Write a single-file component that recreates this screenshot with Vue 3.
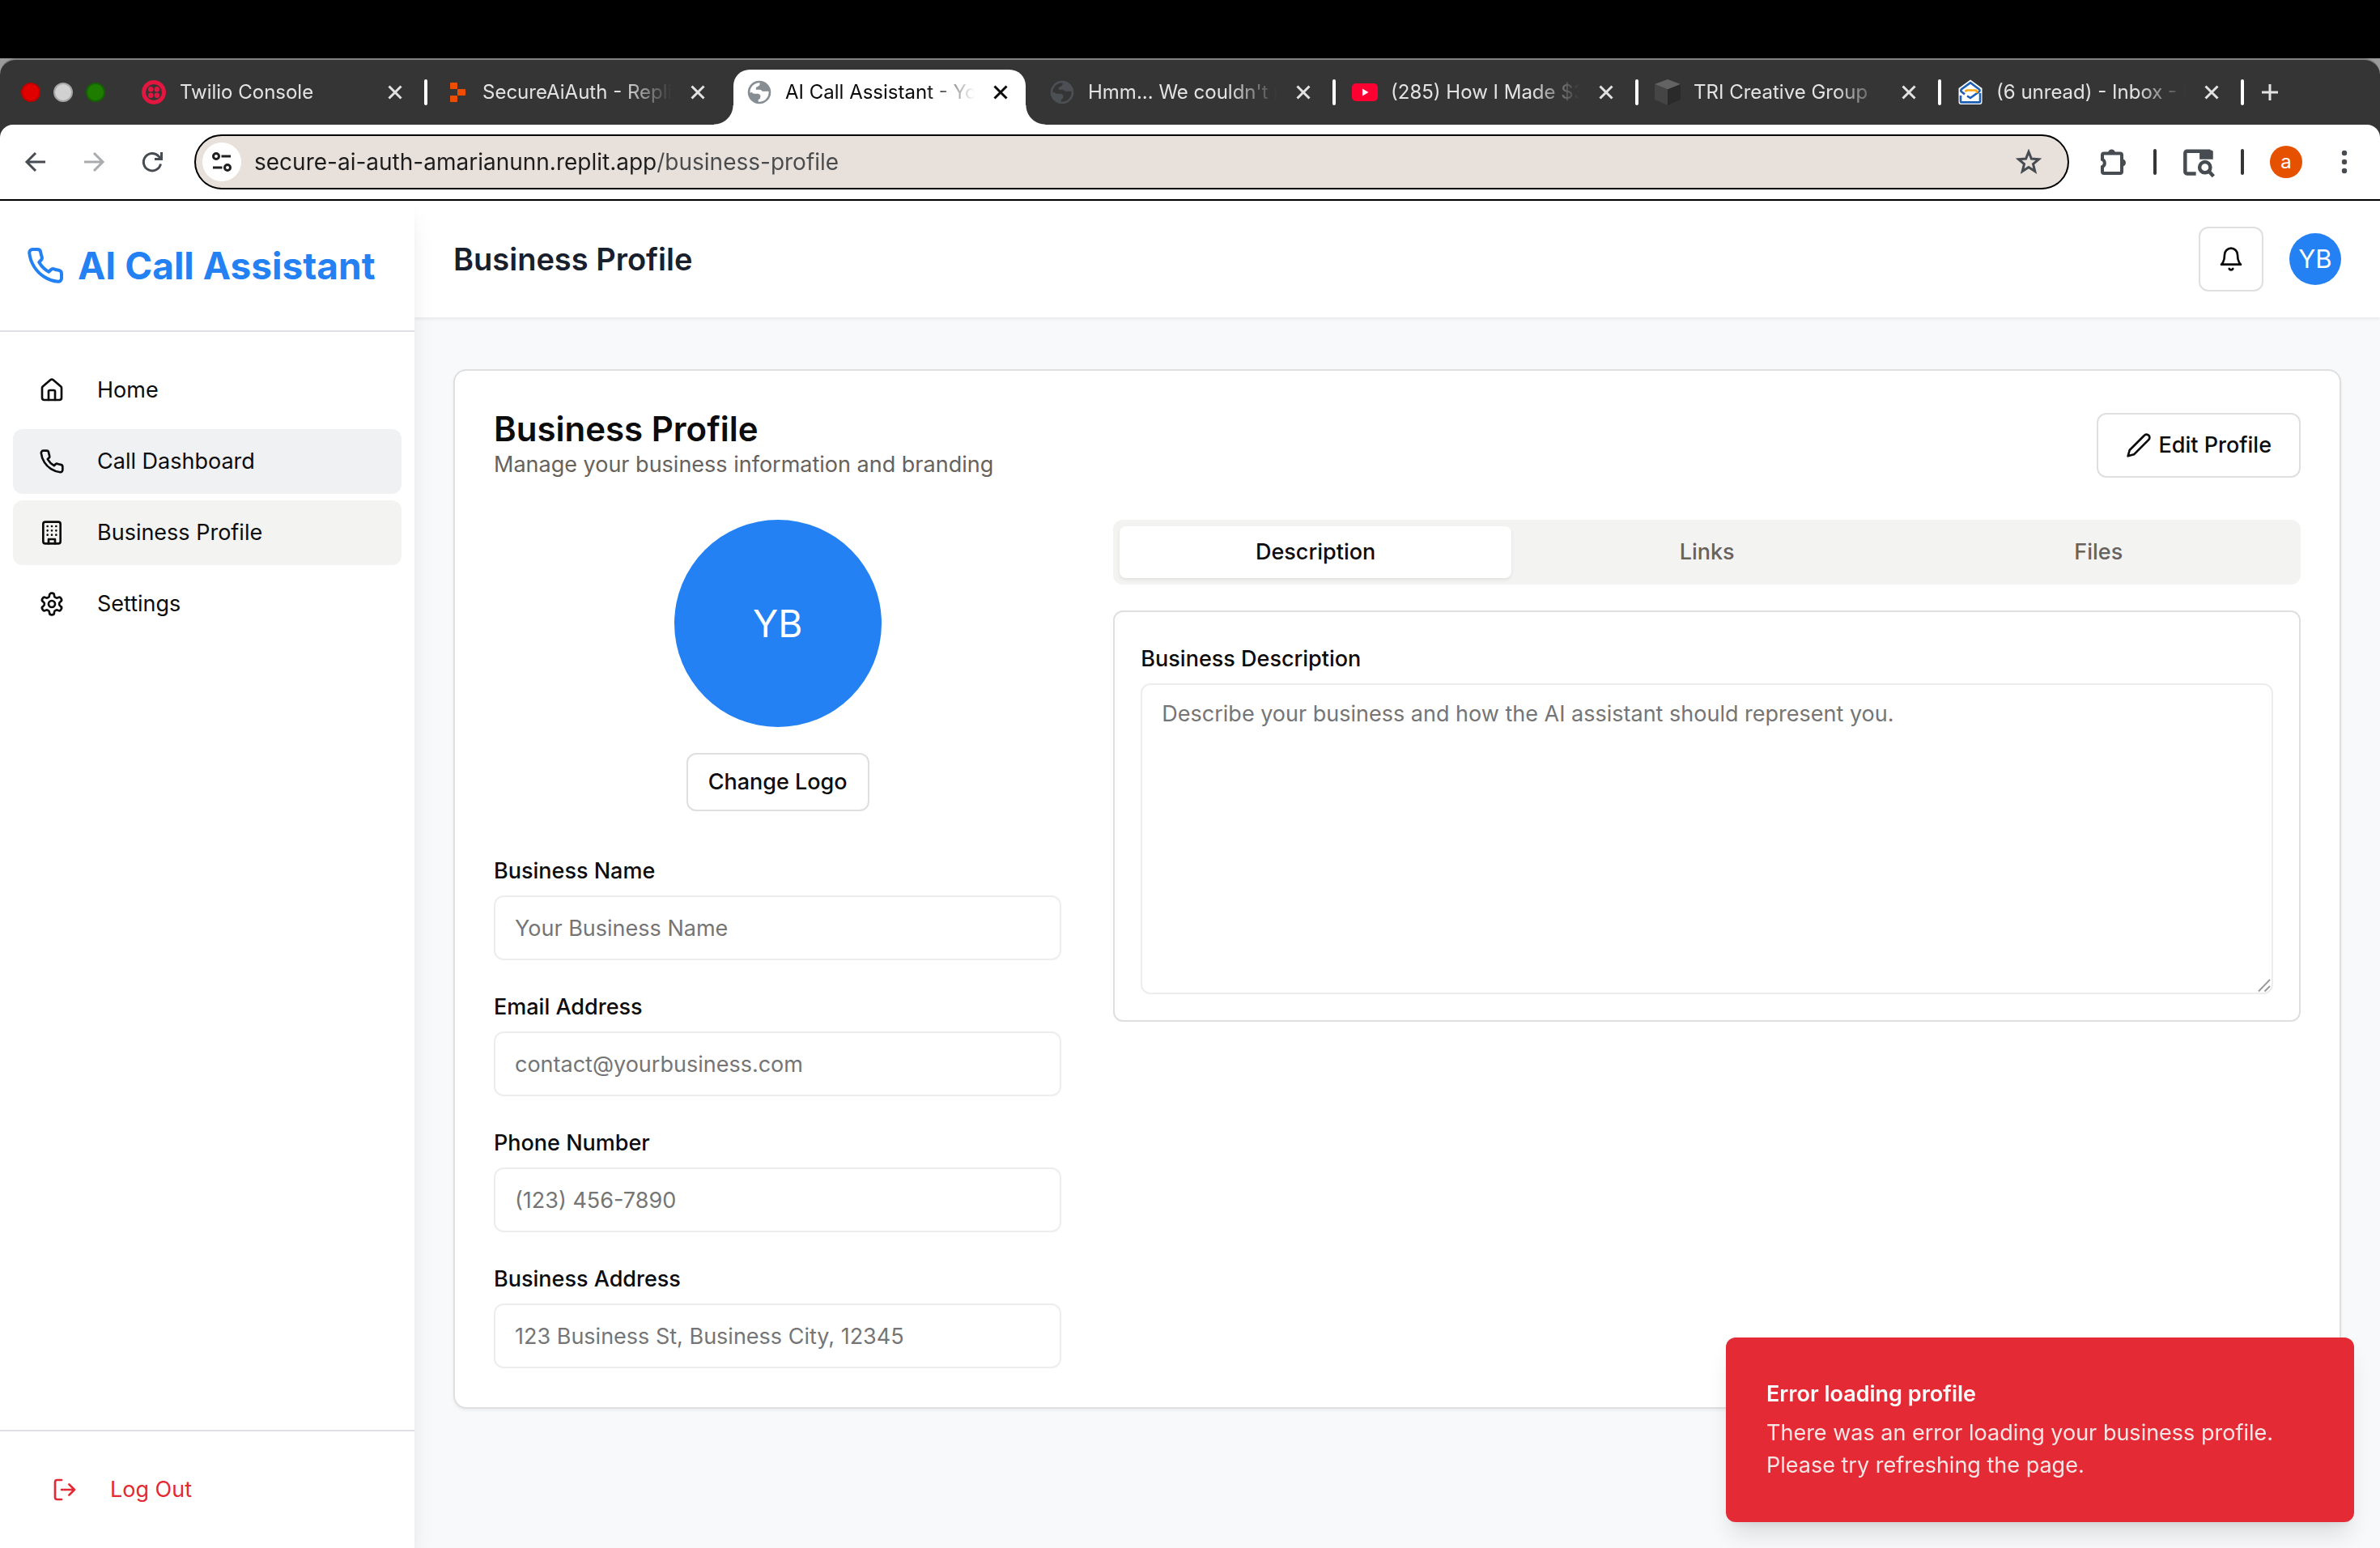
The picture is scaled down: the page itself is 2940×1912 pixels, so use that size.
<script setup>
const tabs = [
  { icon: 'twilio', title: 'Twilio Console', divider: true },
  { icon: 'replit', title: 'SecureAiAuth - Replit' },
  { icon: 'globe', title: 'AI Call Assistant - Your AI', active: true },
  { icon: 'globe', title: "Hmm... We couldn't reach", divider: true },
  { icon: 'youtube', title: '(285) How I Made $30,000', divider: true },
  { icon: 'cube', title: 'TRI Creative Group', divider: true },
  { icon: 'mail', title: '(6 unread) - Inbox - Mail', divider: true },
]

const nav = [
  { icon: 'home', label: 'Home' },
  { icon: 'phone', label: 'Call Dashboard', state: 'hovered' },
  { icon: 'building', label: 'Business Profile', state: 'current' },
  { icon: 'settings', label: 'Settings' },
]

const fields = [
  { id: 'business-name', type: 'text', label: 'Business Name', placeholder: 'Your Business Name' },
  { id: 'email', type: 'email', label: 'Email Address', placeholder: 'contact@yourbusiness.com' },
  { id: 'phone', type: 'tel', label: 'Phone Number', placeholder: '(123) 456-7890' },
  { id: 'address', type: 'text', label: 'Business Address', placeholder: '123 Business St, Business City, 12345' },
]

const panels = ['Description', 'Links', 'Files']
</script>

<template>
  <div class="screen">
    <div class="menu-bar"></div>

    <header class="browser">
      <div class="tab-strip">
        <div class="lights">
          <span class="light red"></span>
          <span class="light grey"></span>
          <span class="light green"></span>
        </div>
        <div v-for="tab in tabs" :key="tab.title" class="tab" :class="{ active: tab.active }">
          <div v-if="tab.active" class="tab-shape"></div>
          <svg v-if="tab.icon === 'twilio'" class="favicon" viewBox="0 0 32 32">
            <circle cx="16" cy="16" r="12.5" fill="none" stroke="#e31640" stroke-width="5" />
            <g fill="#e31640">
              <circle cx="12.2" cy="12.2" r="3.2" /><circle cx="19.8" cy="12.2" r="3.2" />
              <circle cx="12.2" cy="19.8" r="3.2" /><circle cx="19.8" cy="19.8" r="3.2" />
            </g>
          </svg>
          <svg v-else-if="tab.icon === 'replit'" class="favicon" viewBox="0 0 32 32" fill="#ee4d00">
            <rect x="8" y="4" width="9" height="8" rx="1" />
            <rect x="17" y="12" width="10" height="8" rx="1" />
            <rect x="8" y="20" width="9" height="8" rx="1" />
          </svg>
          <svg v-else-if="tab.icon === 'globe'" class="favicon globe" viewBox="-1 -1 26 26">
            <circle class="sea" cx="12" cy="12" r="11.6" />
            <path class="land" d="M2.6 12.5A9.5 9.5 0 0 1 12.4 2.5Q13 5 11 6L8.6 7.2V9.4H12.2Q14 9.4 15 11H21.4A9.5 9.5 0 0 1 11 21.5V19.4Q13.2 18.6 13.2 16.4Q13.2 14 10.6 13.4H7Q5 13.2 4.6 12Z" />
          </svg>
          <svg v-else-if="tab.icon === 'youtube'" class="favicon" viewBox="0 0 32 32">
            <rect x="0" y="5" width="32" height="22" rx="5" fill="#ff0033" />
            <path d="M13 11.5v9l7.5-4.5z" fill="#fff" />
          </svg>
          <svg v-else-if="tab.icon === 'cube'" class="favicon" viewBox="0 0 32 32">
            <path d="M16 0l16 6-16 6.5L0 6z" fill="#636363" />
            <path d="M0 6l16 6.5V32L0 25z" fill="#454545" />
            <path d="M32 6l-16 6.5V32l16-7z" fill="#2a2a2a" />
          </svg>
          <svg v-else class="favicon" viewBox="0 0 32 32">
            <path d="M16 .6L30.5 11v17a3 3 0 0 1-3 3h-23a3 3 0 0 1-3-3V11z" fill="#fff" />
            <g fill="none" stroke="#1d5fb4" stroke-width="2.6">
              <path d="M4 20v7.4a1 1 0 0 0 1 1h22a1 1 0 0 0 1-1V17" />
              <path d="M12 20.500l4 2.500 10.500-7.500c1.500-1.200 1.500-2.200 0-3.500L16 4.200 5 12.200c-1 1-1 2 0 3.200l4 3" />
            </g>
            <path d="M10 15.500c0-1.500 1-2 2.500-2H22c1.500 0 2 .5 2 2v1.500" fill="none" stroke="#f9a514" stroke-width="2.6" />
          </svg>
          <span class="tab-title">{{ tab.title }}</span>
          <button class="tab-close" type="button" aria-label="Close tab">
            <svg viewBox="0 0 32 32"><path d="M8.500 8.500l15 15M23.500 8.500l-15 15" /></svg>
          </button>
          <span class="tab-divider" :class="{ shown: tab.divider }"></span>
        </div>
        <button class="new-tab" type="button" aria-label="New tab">
          <svg viewBox="0 0 32 32"><path d="M16 6v20M6 16h20" /></svg>
        </button>
      </div>

      <div class="toolbar">
        <button class="tool back" type="button" aria-label="Back">
          <svg viewBox="0 0 32 32"><path d="M28 16H5M16 5L5 16l11 11" /></svg>
        </button>
        <button class="tool forward" type="button" aria-label="Forward">
          <svg viewBox="0 0 32 32"><path d="M4 16h23M16 5l11 11-11 11" /></svg>
        </button>
        <button class="tool reload" type="button" aria-label="Reload">
          <svg viewBox="0 0 32 32"><path d="M26.500 18.500A10.700 10.700 0 1 1 24 9l3 3M27.500 4v8.500H19" /></svg>
        </button>
        <div class="address">
          <span class="site-info">
            <svg viewBox="0 0 32 32">
              <circle cx="9" cy="9" r="3.5" /><path d="M15.500 9H27" />
              <circle cx="23" cy="23" r="3.5" /><path d="M5 23h11.500" />
            </svg>
          </span>
          <input class="url" type="text" aria-label="Address" value="secure-ai-auth-amarianunn.replit.app/business-profile" />
          <button class="star" type="button" aria-label="Bookmark this page">
            <svg viewBox="0 0 32 32"><path d="M16 3.500l3.400 8.600 9.100.6-7 5.900 2.300 9L16 22.600l-7.800 5 2.300-9-7-5.900 9.100-.6z" /></svg>
          </button>
        </div>
        <button class="tool puzzle" type="button" aria-label="Extensions">
          <svg viewBox="0 0 36 36">
            <path d="M5 9.500a2 2 0 0 1 2-2h20a2 2 0 0 1 2 2V30a2 2 0 0 1-2 2H7a2 2 0 0 1-2-2v-6a5 5 0 0 0 0-9z" />
            <path class="solid" d="M12 7a4.500 4.500 0 0 1 9 0zM29.500 14.500a4.500 4.500 0 0 1 0 9z" />
          </svg>
        </button>
        <span class="tool-divider"></span>
        <button class="tool lens" type="button" aria-label="Search this page">
          <svg viewBox="0 0 36 36">
            <path d="M15 31H5a2 2 0 0 1-2-2V8a2 2 0 0 1 2-2h26" />
            <path class="solid" d="M19 5h13a2 2 0 0 1 2 2v8H19z" />
            <circle cx="25" cy="24" r="6" /><path d="M29.500 28.500l5 5.500" />
          </svg>
        </button>
        <span class="tool-divider"></span>
        <button class="profile" type="button" aria-label="Browser profile">a</button>
        <button class="tool more" type="button" aria-label="More">
          <svg viewBox="0 0 32 32"><circle cx="16" cy="5" r="3.2" /><circle cx="16" cy="16" r="3.2" /><circle cx="16" cy="27" r="3.2" /></svg>
        </button>
      </div>
    </header>

    <div class="app">
      <aside class="sidebar">
        <div class="brand">
          <svg class="icon brand-icon" viewBox="0 0 24 24">
            <path d="M22 16.920v3a2 2 0 0 1-2.180 2 19.790 19.790 0 0 1-8.630-3.070 19.500 19.500 0 0 1-6-6 19.790 19.790 0 0 1-3.070-8.670A2 2 0 0 1 4.110 2h3a2 2 0 0 1 2 1.720 12.840 12.840 0 0 0 .7 2.810 2 2 0 0 1-.45 2.110L8.090 9.910a16 16 0 0 0 6 6l1.270-1.270a2 2 0 0 1 2.110-.45 12.840 12.840 0 0 0 2.810.7A2 2 0 0 1 22 16.920z" />
          </svg>
          <span>AI Call Assistant</span>
        </div>
        <nav class="nav">
          <a v-for="item in nav" :key="item.label" href="#" class="nav-item" :class="item.state">
            <svg class="icon" viewBox="0 0 24 24">
              <template v-if="item.icon === 'home'">
                <path d="M15 21v-8a1 1 0 0 0-1-1h-4a1 1 0 0 0-1 1v8" />
                <path d="M3 10a2 2 0 0 1 .709-1.528l7-5.999a2 2 0 0 1 2.582 0l7 5.999A2 2 0 0 1 21 10v9a2 2 0 0 1-2 2H5a2 2 0 0 1-2-2z" />
              </template>
              <path v-else-if="item.icon === 'phone'" d="M22 16.920v3a2 2 0 0 1-2.180 2 19.790 19.790 0 0 1-8.630-3.070 19.500 19.500 0 0 1-6-6 19.790 19.790 0 0 1-3.070-8.670A2 2 0 0 1 4.110 2h3a2 2 0 0 1 2 1.720 12.840 12.840 0 0 0 .7 2.810 2 2 0 0 1-.45 2.110L8.090 9.910a16 16 0 0 0 6 6l1.270-1.270a2 2 0 0 1 2.110-.45 12.840 12.840 0 0 0 2.810.7A2 2 0 0 1 22 16.920z" />
              <template v-else-if="item.icon === 'building'">
                <rect width="16" height="20" x="4" y="2" rx="2" ry="2" />
                <path d="M9 22v-4h6v4M8 6h.01M16 6h.01M12 6h.01M12 10h.01M12 14h.01M16 10h.01M16 14h.01M8 10h.01M8 14h.01" />
              </template>
              <template v-else>
                <path d="M12.220 2h-.44a2 2 0 0 0-2 2v.18a2 2 0 0 1-1 1.730l-.43.250a2 2 0 0 1-2 0l-.15-.08a2 2 0 0 0-2.730.730l-.220.380a2 2 0 0 0 .730 2.730l.150.100a2 2 0 0 1 1 1.720v.510a2 2 0 0 1-1 1.740l-.150.090a2 2 0 0 0-.730 2.730l.220.380a2 2 0 0 0 2.730.730l.150-.080a2 2 0 0 1 2 0l.430.250a2 2 0 0 1 1 1.730V20a2 2 0 0 0 2 2h.440a2 2 0 0 0 2-2v-.180a2 2 0 0 1 1-1.730l.430-.250a2 2 0 0 1 2 0l.150.080a2 2 0 0 0 2.730-.730l.220-.390a2 2 0 0 0-.730-2.730l-.150-.080a2 2 0 0 1-1-1.740v-.500a2 2 0 0 1 1-1.740l.150-.090a2 2 0 0 0 .730-2.730l-.220-.380a2 2 0 0 0-2.730-.730l-.150.080a2 2 0 0 1-2 0l-.430-.250a2 2 0 0 1-1-1.730V4a2 2 0 0 0-2-2z" />
                <circle cx="12" cy="12" r="3" />
              </template>
            </svg>
            <span>{{ item.label }}</span>
          </a>
        </nav>
        <div class="sidebar-foot">
          <button class="logout" type="button">
            <svg class="icon" viewBox="0 0 24 24"><path d="M9 21H5a2 2 0 0 1-2-2V5a2 2 0 0 1 2-2h4M16 17l5-5-5-5M21 12H9" /></svg>
            <span>Log Out</span>
          </button>
        </div>
      </aside>

      <div class="content">
        <header class="page-head">
          <h1>Business Profile</h1>
          <div class="head-actions">
            <button class="outline bell" type="button" aria-label="Notifications">
              <svg class="icon" viewBox="0 0 24 24"><path d="M6 8a6 6 0 0 1 12 0c0 7 3 9 3 9H3s3-2 3-9M10.300 21a1.940 1.940 0 0 0 3.400 0" /></svg>
            </button>
            <span class="avatar small">YB</span>
          </div>
        </header>

        <main class="main">
          <section class="card">
            <div class="card-head">
              <div>
                <h2>Business Profile</h2>
                <p>Manage your business information and branding</p>
              </div>
              <button class="outline edit" type="button">
                <svg class="icon" viewBox="0 0 24 24"><path d="M17 3a2.850 2.830 0 1 1 4 4L7.500 20.500 2 22l1.500-5.500z" /></svg>
                Edit Profile
              </button>
            </div>

            <div class="grid">
              <div class="left">
                <div class="logo">
                  <span class="avatar large">YB</span>
                  <button class="outline change" type="button">Change Logo</button>
                </div>
                <form class="fields">
                  <div v-for="f in fields" :key="f.id" class="field">
                    <label :for="f.id">{{ f.label }}</label>
                    <input :id="f.id" :type="f.type" :placeholder="f.placeholder" />
                  </div>
                </form>
              </div>

              <div class="right">
                <div class="switcher" role="tablist">
                  <button v-for="(p, i) in panels" :key="p" type="button" role="tab" :aria-selected="i === 0" :class="{ selected: i === 0 }">{{ p }}</button>
                </div>
                <div class="panel">
                  <label for="description">Business Description</label>
                  <div class="area">
                    <textarea id="description" placeholder="Describe your business and how the AI assistant should represent you."></textarea>
                    <svg class="grip" viewBox="0 0 16 16"><path d="M1 15.500L15 1M8.500 15.500L15 9" /></svg>
                  </div>
                </div>
              </div>
            </div>
          </section>
        </main>
      </div>
    </div>

    <div class="toast" role="alert">
      <strong>Error loading profile</strong>
      <p>There was an error loading your business profile. Please try refreshing the page.</p>
    </div>
  </div>
</template>

<style>
html,
body {
  margin: 0;
  background: #f8f9fb;
}
</style>

<style scoped>
.screen,
.screen * {
  box-sizing: border-box;
}
.screen {
  display: flex;
  flex-direction: column;
  min-height: 100vh;
  font-family: Inter, "Liberation Sans", sans-serif;
  font-size: 27px;
  line-height: 40px;
  color: #0c0c0d;
}
button,
input,
textarea {
  font: inherit;
  color: inherit;
  margin: 0;
}
button {
  border: 0;
  padding: 0;
  background: none;
}
svg {
  display: block;
  flex: none;
}
h1,
h2,
p {
  margin: 0;
}
.icon {
  width: 32px;
  height: 32px;
  fill: none;
  stroke: currentColor;
  stroke-width: 2;
  stroke-linecap: round;
  stroke-linejoin: round;
}

/* Browser window */
.menu-bar {
  height: 72px;
  background: #000;
}
.browser {
  position: relative;
  z-index: 2;
  background: linear-gradient(#9b9b9b 60px, #353535 60px);
}
.tab-strip {
  display: flex;
  height: 82px;
  border-top: 2px solid #828282;
  border-radius: 20px 20px 0 0;
  background: #353535;
}
.lights {
  display: flex;
  flex: none;
  align-items: center;
  gap: 16px;
  width: 154px;
  padding-left: 26px;
}
.light {
  width: 24px;
  height: 24px;
  border-radius: 50%;
}
.light.red {
  background: #e00000;
  border: 2px solid #bd0000;
}
.light.grey {
  background: #d1d1d1;
  border: 2px solid #a5a5a5;
}
.light.green {
  background: #1e7c00;
  border: 2px solid #146300;
}
.tab {
  position: relative;
  display: flex;
  flex: 0 1 374px;
  align-items: center;
  gap: 16px;
  min-width: 0;
  padding-left: 20px;
  font-size: 24px;
  color: #e3e3e3;
}
.tab > * {
  position: relative;
}
.tab.active {
  color: #0a0a0a;
}
.tab .tab-shape {
  position: absolute;
  inset: 12px 9px 0 4px;
  border-radius: 20px 20px 0 0;
  background: #fff;
}
.tab-shape::before,
.tab-shape::after {
  content: "";
  position: absolute;
  bottom: 0;
  width: 24px;
  height: 24px;
}
.tab-shape::before {
  right: 100%;
  background: radial-gradient(circle at 0 0, transparent 23px, #fff 24px);
}
.tab-shape::after {
  left: 100%;
  background: radial-gradient(circle at 100% 0, transparent 23px, #fff 24px);
}
.favicon {
  width: 32px;
  height: 32px;
}
.globe .sea {
  fill: #4c5055;
}
.globe .land {
  fill: #353535;
}
.active .globe .sea {
  fill: #868d93;
}
.active .globe .land {
  fill: #fff;
}
.tab-title {
  flex: 1;
  min-width: 0;
  overflow: hidden;
  white-space: nowrap;
  -webkit-mask-image: linear-gradient(to right, #000 calc(100% - 60px), transparent);
  mask-image: linear-gradient(to right, #000 calc(100% - 60px), transparent);
}
.tab-close svg {
  width: 32px;
  height: 32px;
  fill: none;
  stroke: currentColor;
  stroke-width: 3;
}
.tab-divider {
  flex: none;
  width: 4px;
  height: 32px;
  margin-left: 4px;
  border-radius: 2px;
}
.tab-divider.shown {
  background: #fff;
}
.new-tab {
  flex: none;
  margin-left: 16px;
  color: #e3e3e3;
}
.new-tab svg {
  width: 32px;
  height: 32px;
  fill: none;
  stroke: currentColor;
  stroke-width: 3;
}
.toolbar {
  display: flex;
  align-items: center;
  height: 94px;
  padding: 0 28px;
  border-bottom: 2px solid #000;
  border-radius: 16px 16px 0 0;
  background: #fff;
  color: #474c52;
}
.tool svg {
  width: 32px;
  height: 32px;
  fill: none;
  stroke: currentColor;
  stroke-width: 3;
}
.tool .solid {
  fill: currentColor;
  stroke: none;
}
.forward {
  margin-left: 40px;
  color: #a9abae;
}
.reload {
  margin-left: 40px;
}
.address {
  display: flex;
  flex: 1;
  align-items: center;
  min-width: 0;
  height: 68px;
  margin-left: 36px;
  padding: 0 32px 0 8px;
  border: 2px solid #000;
  border-radius: 34px;
  background: #e8e0db;
}
.site-info {
  display: flex;
  flex: none;
  align-items: center;
  justify-content: center;
  width: 48px;
  height: 48px;
  border-radius: 50%;
  background: #fff;
}
.site-info svg {
  width: 32px;
  height: 32px;
  fill: none;
  stroke: #1f1f1f;
  stroke-width: 3;
}
.url {
  flex: 1;
  min-width: 0;
  margin-left: 16px;
  padding: 0;
  border: 0;
  outline: 0;
  /* the domain is darker than the path after it */
  background: linear-gradient(to right, #1c1c1c 496px, #494a4c 496px);
  -webkit-background-clip: text;
  background-clip: text;
  font-size: 28px;
  color: transparent;
}
.star svg {
  width: 32px;
  height: 32px;
  fill: none;
  stroke: #474c52;
  stroke-width: 3;
}
.puzzle {
  margin-left: 36px;
}
.puzzle svg {
  width: 36px;
  height: 36px;
  stroke-width: 4;
}
.lens svg {
  width: 40px;
  height: 40px;
  stroke-width: 4;
}
.tool-divider {
  flex: none;
  width: 4px;
  height: 32px;
  margin: 0 32px;
  border-radius: 2px;
  background: #353535;
}
.profile {
  flex: none;
  width: 40px;
  height: 40px;
  border-radius: 50%;
  background: #e65100;
  font-size: 24px;
  line-height: 36px;
  color: #fff;
}
.more {
  margin-left: 36px;
}
.more svg {
  fill: currentColor;
  stroke: none;
}

/* Application */
.app {
  display: flex;
  flex: 1;
}
.sidebar {
  position: relative;
  z-index: 1;
  display: flex;
  flex: none;
  flex-direction: column;
  width: 512px;
  background: #fff;
  box-shadow: 0 20px 30px -6px rgba(0, 0, 0, 0.1), 0 8px 12px -8px rgba(0, 0, 0, 0.1);
}
.brand {
  display: flex;
  align-items: center;
  gap: 16px;
  height: 162px;
  padding: 0 32px;
  border-bottom: 2px solid #dfe0e5;
  font-size: 46px;
  font-weight: 700;
  white-space: nowrap;
  color: #2481f3;
}
.brand-icon {
  width: 48px;
  height: 48px;
}
.nav {
  display: flex;
  flex: 1;
  flex-direction: column;
  gap: 8px;
  padding: 32px 16px;
}
.nav-item {
  display: flex;
  align-items: center;
  gap: 40px;
  height: 80px;
  padding: 0 32px;
  border-radius: 12px;
  color: inherit;
  text-decoration: none;
}
.nav-item.hovered {
  background: #f0f1f3;
}
.nav-item.current {
  background: #f3f3f1;
}
.sidebar-foot {
  padding: 32px;
  border-top: 2px solid #dfe0e5;
}
.logout {
  display: flex;
  align-items: center;
  gap: 40px;
  height: 80px;
  padding: 0 32px;
  color: #e32933;
}
.content {
  flex: 1;
  min-width: 0;
  background: #f8f9fb;
}
.page-head {
  display: flex;
  align-items: center;
  justify-content: space-between;
  padding: 32px 48px;
  background: #fff;
  box-shadow: 0 2px 4px rgba(0, 0, 0, 0.07);
}
.page-head h1 {
  font-size: 38px;
  font-weight: 600;
  color: #18202e;
}
.head-actions {
  display: flex;
  align-items: center;
  gap: 32px;
}
.outline {
  display: flex;
  align-items: center;
  justify-content: center;
  gap: 8px;
  height: 80px;
  border: 2px solid #dfdfdf;
  border-radius: 12px;
  background: #fff;
  font-weight: 500;
}
.bell {
  width: 80px;
}
.avatar {
  display: flex;
  align-items: center;
  justify-content: center;
  border-radius: 50%;
  background: #2481f3;
  color: #fff;
}
.avatar.small {
  width: 64px;
  height: 64px;
  font-size: 31px;
}
.avatar.large {
  width: 256px;
  height: 256px;
  font-size: 46px;
}
.main {
  padding: 64px 48px 0;
}
.card {
  padding: 48px;
  border: 2px solid #dfdfdf;
  border-radius: 16px;
  background: #fff;
  box-shadow: 0 2px 4px rgba(0, 0, 0, 0.06);
}
.card-head {
  display: flex;
  align-items: center;
  justify-content: space-between;
}
.card-head h2 {
  font-size: 42px;
  font-weight: 600;
  line-height: 48px;
}
.card-head p {
  color: #67625c;
}
.edit {
  padding: 0 34px;
}
.grid {
  display: grid;
  grid-template-columns: repeat(3, minmax(0, 1fr));
  gap: 64px;
  margin-top: 48px;
}
.right {
  grid-column: span 2;
}
.logo {
  display: flex;
  flex-direction: column;
  align-items: center;
  gap: 32px;
}
.change {
  height: 72px;
  padding: 0 25px;
}
.fields {
  display: flex;
  flex-direction: column;
  gap: 44px;
  margin-top: 60px;
}
.field,
.panel {
  display: flex;
  flex-direction: column;
  gap: 16px;
}
label {
  font-weight: 500;
  line-height: 28px;
}
.field input,
textarea {
  width: 100%;
  border: 2px solid #ededed;
  border-radius: 12px;
  outline: 0;
  background: #fff;
}
.field input {
  height: 80px;
  padding: 0 24px;
}
input::placeholder,
textarea::placeholder {
  color: #757575;
  opacity: 1;
}
.switcher {
  display: grid;
  grid-template-columns: repeat(3, 1fr);
  height: 80px;
  padding: 8px;
  border-radius: 12px;
  background: #f3f3f1;
}
.switcher button {
  border-radius: 8px;
  font-weight: 500;
  color: #67625c;
}
.switcher .selected {
  background: #fff;
  color: #0c0c0d;
  box-shadow: 0 2px 4px rgba(0, 0, 0, 0.08);
}
.panel {
  margin-top: 32px;
  padding: 44px 32px 32px;
  border: 2px solid #dfdfdf;
  border-radius: 12px;
}
.area {
  position: relative;
}
textarea {
  display: block;
  height: 384px;
  padding: 16px 24px;
  resize: none;
}
.grip {
  position: absolute;
  right: 3px;
  bottom: 3px;
  width: 16px;
  height: 16px;
  fill: none;
  stroke: #9a9a9a;
  stroke-width: 2;
}
.toast {
  position: fixed;
  right: 32px;
  bottom: 32px;
  z-index: 3;
  width: 776px;
  padding: 50px;
  border-radius: 12px;
  background: #e42b35;
  box-shadow: 0 20px 30px -6px rgba(0, 0, 0, 0.12), 0 8px 12px -8px rgba(0, 0, 0, 0.1);
  color: #fafafa;
}
.toast strong {
  display: block;
  margin-bottom: 8px;
  font-weight: 600;
}
.toast p {
  opacity: 0.9;
}
</style>
